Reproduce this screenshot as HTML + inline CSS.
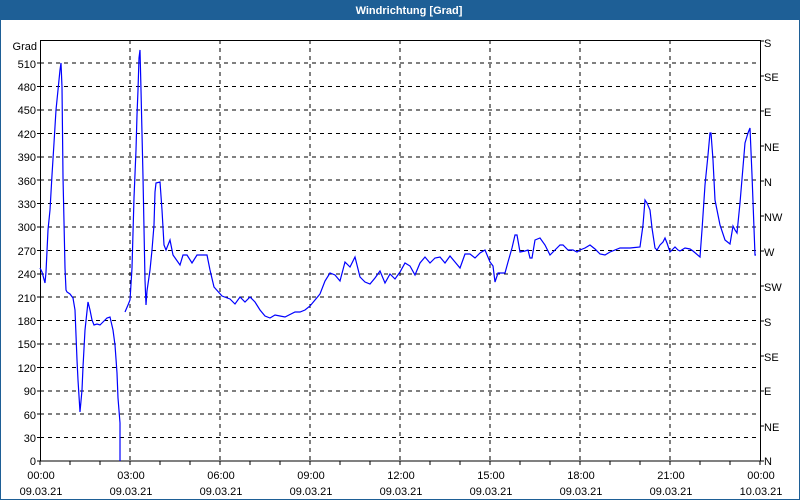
<!DOCTYPE html>
<html><head><meta charset="utf-8"><style>
html,body{margin:0;padding:0;background:#fff;}
svg{display:block;}
text{font-family:"Liberation Sans",sans-serif;font-size:11px;fill:#000;}
</style></head><body>
<svg width="800" height="500" viewBox="0 0 800 500" xmlns="http://www.w3.org/2000/svg">
<rect x="0" y="0" width="800" height="500" fill="#fff"/>
<rect x="0.5" y="0.5" width="799" height="499" fill="none" stroke="#1e5f96"/>
<rect x="0" y="0" width="800" height="20" fill="#1e5f96"/>
<text x="409" y="14" text-anchor="middle" style="fill:#fff;font-weight:bold;font-size:11px">Windrichtung [Grad]</text>
<g stroke="#000" stroke-dasharray="4,4" stroke-width="1" fill="none" shape-rendering="crispEdges">
<path d="M40 437.6H760M40 414.2H760M40 390.8H760M40 367.4H760M40 344H760M40 320.6H760M40 297.2H760M40 273.8H760M40 250.4H760M40 227H760M40 203.6H760M40 180.2H760M40 156.8H760M40 133.4H760M40 110H760M40 86.6H760M40 63.2H760"/>
<path d="M130 40V461M220 40V461M310 40V461M400 40V461M490 40V461M580 40V461M670 40V461"/>
</g>
<g stroke="#000" fill="none" shape-rendering="crispEdges">
<rect x="40.5" y="40.5" width="720" height="420.5"/>
<path d="M37 461H40M37 437.6H40M37 414.2H40M37 390.8H40M37 367.4H40M37 344H40M37 320.6H40M37 297.2H40M37 273.8H40M37 250.4H40M37 227H40M37 203.6H40M37 180.2H40M37 156.8H40M37 133.4H40M37 110H40M37 86.6H40M37 63.2H40"/>
<path d="M40 461V465M70 461V465M100 461V465M130 461V465M160 461V465M190 461V465M220 461V465M250 461V465M280 461V465M310 461V465M340 461V465M370 461V465M400 461V465M430 461V465M460 461V465M490 461V465M520 461V465M550 461V465M580 461V465M610 461V465M640 461V465M670 461V465M700 461V465M730 461V465M760 461V465"/>
<path d="M760 41H764M760 76H764M760 111H764M760 146H764M760 181H764M760 216H764M760 251H764M760 286H764M760 321H764M760 356H764M760 391H764M760 426H764M760 461H764"/>
</g>
<g text-anchor="end">
<text x="37" y="50">Grad</text>
<text x="36" y="68">510</text><text x="36" y="91">480</text><text x="36" y="114">450</text><text x="36" y="138">420</text><text x="36" y="161">390</text><text x="36" y="185">360</text><text x="36" y="208">330</text><text x="36" y="231">300</text><text x="36" y="255">270</text><text x="36" y="278">240</text><text x="36" y="302">210</text><text x="36" y="325">180</text><text x="36" y="348">150</text><text x="36" y="372">120</text><text x="36" y="395">90</text><text x="36" y="419">60</text><text x="36" y="442">30</text><text x="36" y="465">0</text>
</g>
<g>
<text x="764" y="47">S</text><text x="764" y="81">SE</text><text x="764" y="116">E</text><text x="764" y="151">NE</text><text x="764" y="186">N</text><text x="764" y="221">NW</text><text x="764" y="256">W</text><text x="764" y="291">SW</text><text x="764" y="326">S</text><text x="764" y="361">SE</text><text x="764" y="395">E</text><text x="764" y="431">NE</text><text x="764" y="465">N</text>
</g>
<g text-anchor="middle">
<text x="41" y="479">00:00</text><text x="41" y="495">09.03.21</text>
<text x="131" y="479">03:00</text><text x="131" y="495">09.03.21</text>
<text x="221" y="479">06:00</text><text x="221" y="495">09.03.21</text>
<text x="311" y="479">09:00</text><text x="311" y="495">09.03.21</text>
<text x="401" y="479">12:00</text><text x="401" y="495">09.03.21</text>
<text x="491" y="479">15:00</text><text x="491" y="495">09.03.21</text>
<text x="581" y="479">18:00</text><text x="581" y="495">09.03.21</text>
<text x="671" y="479">21:00</text><text x="671" y="495">09.03.21</text>
<text x="761" y="479">00:00</text><text x="761" y="495">10.03.21</text>
</g>
<g fill="none" stroke="#0000ff" stroke-width="1.2">
<polyline points="40,268 42,272 45,283 46,272 48,230 50,210 52,175 54,143 56,110 58,90 60,70 61,63 62,87 63,177 64,222 65,268 66,290 67,292 70,294 73,298 75,310 77,360 78,380 80,412 82,390 83,367 85,330 88,302 90,310 92,320 94,325 97,324 100,325 103,322 107,318 110,317 113,330 115,345 117,373 118,398 120,423 120,461"/>
<polyline points="125,312 128,305 130,300 132,268 134,198 136,150 137,115 138,90 139,58 140,50 141,90 143,177 145,280 146,305 147,291 150,270 152,250 154,225 155,192 156,183 160,182 162,210 164,245 166,250 170,240 173,255 180,265 183,255 187,255 192,263 197,255 207,255 210,270 214,287 222,296 230,299 235,304 240,297 245,302 250,297 255,302 260,310 265,316 270,318 275,315 280,316 285,317 295,312 300,312 305,310 310,306 315,300 320,294 325,281 330,273 335,275 340,281 345,262 350,267 355,257 360,277 365,282 370,284 375,278 380,271 385,283 390,274 395,279 400,272 405,263 410,266 415,275 420,263 425,257 430,263 435,258 440,257 445,263 450,256 455,262 460,268 465,254 470,254 475,258 480,253 485,250 490,262 493,266 495,282 498,273 505,273 508,262 512,248 515,235 517,235 520,252 525,251 528,250 530,258 532,258 535,240 540,238 545,245 550,255 555,250 560,245 563,245 568,250 573,250 577,252 580,250 585,248 590,245 595,249 600,254 605,255 610,252 620,248 630,248 640,247 643,225 645,200 647,203 650,210 652,228 655,248 657,250 660,245 663,242 665,238 667,243 670,252 673,249 675,247 678,250 680,251 685,248 690,249 693,251 700,257 702,230 705,185 708,155 710,133 711,133 713,160 715,200 720,225 725,240 730,244 733,226 735,230 737,233 740,203 745,143 748,133 750,128 752,175 755,255 756,255"/>
</g>
</svg>
</body></html>
